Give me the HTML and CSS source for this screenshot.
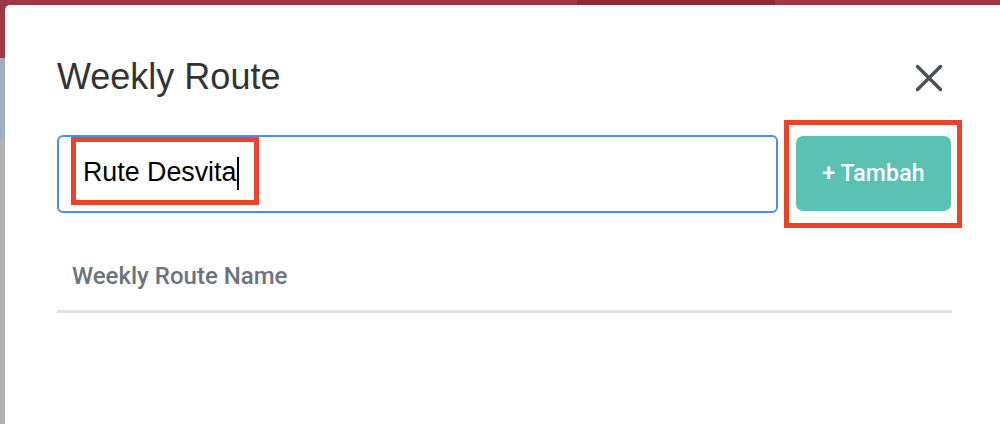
FILE: index.html
```html
<!DOCTYPE html>
<html lang="id">
<head>
<meta charset="utf-8">
<title>Weekly Route</title>
<link rel="stylesheet" href="styles.css">
</head>
<body>
<div class="backdrop">
  <div class="topbar">
    <span class="topbar-seg"></span>
    <span class="topbar-seg dark"></span>
    <span class="topbar-seg"></span>
  </div>
  <div class="sidebar">
    <span class="side-red"></span>
    <span class="side-blue"></span>
    <span class="side-gray"></span>
  </div>
</div>

<div class="modal">
  <div class="modal-header">
    <h1 class="modal-title">Weekly Route</h1>
    <button class="close" type="button" aria-label="Close">
      <svg width="28" height="28" viewBox="0 0 28 28" aria-hidden="true">
        <path d="M2.5 2.5 L25.5 25.5 M25.5 2.5 L2.5 25.5" stroke="#495057" stroke-width="3.4" stroke-linecap="round" fill="none"/>
      </svg>
    </button>
  </div>

  <div class="form-row">
    <div class="field">
      <span class="mark mark-text"><span class="value">Rute Desvita</span><span class="caret"></span></span>
    </div>
    <div class="mark mark-btn">
      <button class="btn-add" type="button">+ Tambah</button>
    </div>
  </div>

  <div class="table">
    <div class="th">Weekly Route Name</div>
  </div>
</div>
</body>
</html>
```

FILE: styles.css
```css
* { box-sizing: border-box; }

html, body {
  margin: 0;
  padding: 0;
  width: 1000px;
  height: 424px;
  overflow: hidden;
}

body {
  position: relative;
  background: #b1b1b1;
  font-family: "Liberation Sans", Arial, sans-serif;
}

.backdrop {
  display: flex;
  flex-direction: column;
  height: 424px;
}

.topbar {
  display: flex;
  height: 6px;
  background: #9d3946;
}

.topbar-seg { flex: 577 0 0; }
.topbar-seg.dark { flex: 198 0 0; background: #8c2a37; }
.topbar-seg:last-child { flex: 225 0 0; }

.sidebar {
  display: flex;
  flex-direction: column;
  width: 6px;
  flex: 1;
}

.side-red { height: 52px; background: #9d3946; }
.side-blue { height: 82px; background: #9eafc1; }
.side-gray { flex: 1; background: #b1b1b1; }

.modal {
  position: absolute;
  left: 5px;
  top: 5px;
  right: 0;
  bottom: 0;
  background: #ffffff;
  border-top-left-radius: 5px;
  padding: 51px 48px 0 52px;
}

.modal-header {
  display: flex;
  align-items: center;
  justify-content: space-between;
  height: 42px;
}

.modal-title {
  margin: 0;
  font-family: "Liberation Sans", Arial, sans-serif;
  font-weight: 400;
  font-size: 36px;
  line-height: 42px;
  color: #333333;
}

.close {
  border: 0;
  background: none;
  padding: 0;
  margin-right: 9px;
  margin-top: 2px;
  width: 28px;
  height: 28px;
  display: flex;
}

.form-row {
  display: flex;
  align-items: center;
  margin-top: 22px;
  margin-right: -10px;
}

.field {
  flex: 0 0 721px;
  height: 78px;
  border: 2px solid #4d8fe8;
  border-radius: 6px;
  padding: 0 0 0 12px;
  display: flex;
  align-items: flex-start;
}

.mark {
  border: 5px solid #e8442b;
}

.mark-text {
  display: flex;
  align-items: center;
  width: 188px;
  height: 68px;
  padding-left: 7px;
}

.value {
  font-family: "Liberation Sans", Arial, sans-serif;
  font-size: 26.8px;
  line-height: 34px;
  color: #000000;
  padding-top: 2px;
}

.caret {
  display: inline-block;
  width: 2px;
  height: 33px;
  background: #000000;
  margin-left: 1px;
  margin-top: 4px;
}

.mark-btn {
  margin-left: 6px;
  padding: 11px 6px 12px 7px;
}

.btn-add {
  display: block;
  width: 155px;
  height: 75px;
  border: 0;
  border-radius: 7px;
  background: #5bc2b3;
  color: #ffffff;
  font-family: Roboto, "Liberation Sans", Arial, sans-serif;
  font-weight: 500;
  font-size: 23px;
  padding: 0;
  letter-spacing: 0.2px;
}

.table {
  margin-top: 21px;
}

.th {
  padding: 11px 15px 18px;
  font-family: Roboto, "Liberation Sans", Arial, sans-serif;
  font-weight: 500;
  font-size: 24px;
  line-height: 32px;
  color: #6c757d;
  border-bottom: 3.5px solid #dee2e6;
}
```
